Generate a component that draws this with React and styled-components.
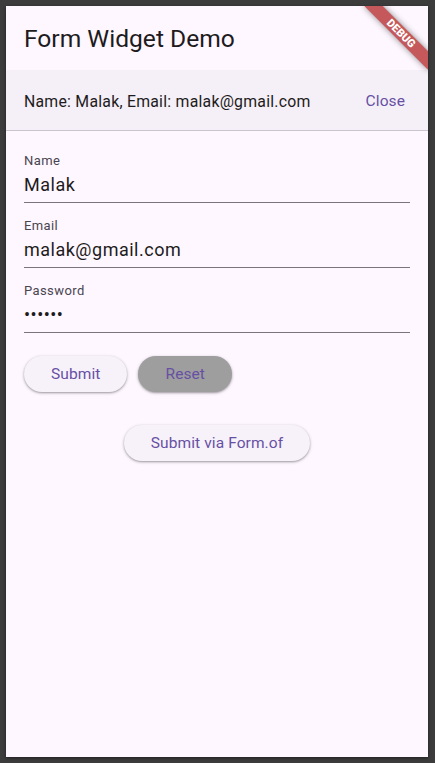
import React from "react";
import styled, { createGlobalStyle } from "styled-components";

const GlobalStyle = createGlobalStyle`
  html, body {
    margin: 0;
    padding: 0;
    background: #3c3c3c;
  }
  body {
    font-family: Roboto, "Noto Sans", sans-serif;
  }
`;

const Frame = styled.div`
  width: 435px;
  height: 763px;
  box-sizing: border-box;
  padding: 6px 7px 6px 6px;
  background: #3c3c3c;
`;

const Screen = styled.div`
  position: relative;
  width: 100%;
  height: 100%;
  overflow: hidden;
  background: #fef7ff;
  box-shadow: 0 1px 3px rgba(0, 0, 0, 0.5);
  display: flex;
  flex-direction: column;
`;

const AppBar = styled.header`
  height: 64px;
  display: flex;
  align-items: center;
  padding: 0 18px;
  flex-shrink: 0;
`;

const Title = styled.h1`
  margin: 0;
  font-size: 24.6px;
  font-weight: 400;
  color: #1d1b20;
  letter-spacing: 0;
`;

const Banner = styled.div`
  height: 61px;
  display: flex;
  align-items: center;
  justify-content: space-between;
  padding: 2px 11px 0 18px;
  box-sizing: border-box;
  background: #f5eff7;
  border-bottom: 1px solid #cac4d0;
  flex-shrink: 0;
`;

const BannerText = styled.span`
  font-size: 15.8px;
  color: #1d1b20;
  letter-spacing: 0.25px;
`;

const TextButton = styled.button`
  border: none;
  background: transparent;
  padding: 0 12px;
  height: 36px;
  font-family: inherit;
  font-size: 15.5px;
  font-weight: 400;
  color: #6750a4;
  letter-spacing: 0.1px;
`;

const Form = styled.form`
  display: flex;
  flex-direction: column;
  padding: 7px 18px 0;
`;

const Field = styled.label`
  display: flex;
  flex-direction: column;
  padding: 15px 0 5px;
  border-bottom: 1px solid #79747e;
`;

const FieldLabel = styled.span`
  font-size: 13px;
  line-height: 16px;
  color: #49454f;
  letter-spacing: 0.4px;
`;

const FieldValue = styled.span`
  margin-top: 3px;
  font-size: 18px;
  line-height: 25px;
  color: #1d1b20;
  letter-spacing: 0.5px;
`;

const ButtonRow = styled.div`
  display: flex;
  gap: 11px;
  margin-top: 23px;
`;

const CenterRow = styled.div`
  display: flex;
  justify-content: center;
  margin-top: 33px;
`;

const ElevatedButton = styled.button`
  height: 36px;
  padding: 0 27px;
  border: none;
  border-radius: 18px;
  background: ${(p) => p.$bg || "#f7f2fa"};
  color: #6750a4;
  font-family: inherit;
  font-size: 15.5px;
  font-weight: 400;
  letter-spacing: 0.1px;
  box-shadow: 0 1px 2px rgba(0, 0, 0, 0.28), 0 1px 3px 1px rgba(0, 0, 0, 0.1);
`;

const DebugRibbon = styled.div`
  position: absolute;
  top: 20.5px;
  right: -18px;
  width: 90px;
  height: 13px;
  transform: rotate(45deg);
  background: rgba(176, 32, 32, 0.74);
  box-shadow: 0 0 6px rgba(0, 0, 0, 0.45);
  color: #fff;
  font-size: 11px;
  font-weight: 900;
  line-height: 13px;
  text-align: center;
  letter-spacing: 0;
`;

export default function App() {
  return (
    <Frame>
      <GlobalStyle />
      <Screen>
        <AppBar>
          <Title>Form Widget Demo</Title>
        </AppBar>
        <Banner>
          <BannerText>Name: Malak, Email: malak@gmail.com</BannerText>
          <TextButton type="button">Close</TextButton>
        </Banner>
        <Form onSubmit={(e) => e.preventDefault()}>
          <Field>
            <FieldLabel>Name</FieldLabel>
            <FieldValue>Malak</FieldValue>
          </Field>
          <Field>
            <FieldLabel>Email</FieldLabel>
            <FieldValue>malak@gmail.com</FieldValue>
          </Field>
          <Field>
            <FieldLabel>Password</FieldLabel>
            <FieldValue>••••••</FieldValue>
          </Field>
          <ButtonRow>
            <ElevatedButton type="submit">Submit</ElevatedButton>
            <ElevatedButton type="button" $bg="#9e9e9e">
              Reset
            </ElevatedButton>
          </ButtonRow>
          <CenterRow>
            <ElevatedButton type="button">Submit via Form.of</ElevatedButton>
          </CenterRow>
        </Form>
        <DebugRibbon>DEBUG</DebugRibbon>
      </Screen>
    </Frame>
  );
}
